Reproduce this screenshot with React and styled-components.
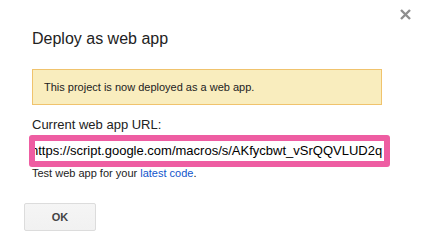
import styled, { createGlobalStyle } from "styled-components";

const GlobalStyle = createGlobalStyle`
  body {
    margin: 0;
    background: #ffffff;
    font-family: "Liberation Sans", Arial, sans-serif;
  }
`;

const Dialog = styled.div`
  position: relative;
  width: 424px;
  height: 241px;
  box-sizing: border-box;
  background: #ffffff;
  color: #222222;
`;

const CloseButton = styled.button`
  position: absolute;
  top: 8px;
  right: 13px;
  width: 12px;
  height: 12px;
  padding: 0;
  border: 0;
  background: transparent;
  display: flex;
  align-items: center;
  justify-content: center;
  cursor: pointer;
`;

const Content = styled.div`
  padding: 29px 32px 0;
`;

const Title = styled.h2`
  margin: 0;
  font-size: 16px;
  line-height: 20px;
  font-weight: normal;
  color: #222222;
`;

const Notice = styled.div`
  margin-top: 20px;
  width: 350px;
  box-sizing: border-box;
  padding: 10px 11px;
  border: 1px solid #f0c36d;
  background: #f9edbe;
  font-size: 11px;
  line-height: 14px;
  color: #222222;
`;

const Label = styled.div`
  margin-top: 12px;
  font-size: 13px;
  line-height: 16px;
`;

const UrlField = styled.div`
  margin: 2px 0 0 -3px;
  width: 361px;
  height: 32px;
  box-sizing: border-box;
  border: 6px solid #ee5da2;
  border-radius: 3px;
  background: #ffffff;
  overflow: hidden;
  white-space: nowrap;
  font-size: 13px;
  line-height: 20px;
  color: #000000;
`;

const UrlText = styled.span`
  display: inline-block;
  margin-left: -4px;
`;

const Help = styled.div`
  margin-top: -1px;
  font-size: 11px;
  line-height: 14px;
  color: #222222;
`;

const Link = styled.a`
  color: #1155cc;
  text-decoration: none;
`;

const Footer = styled.div`
  margin-top: 23px;
  padding-left: 24px;
  display: flex;
`;

const Button = styled.button`
  width: 72px;
  height: 28px;
  box-sizing: border-box;
  border: 1px solid #dcdcdc;
  border-radius: 2px;
  background: linear-gradient(#f5f5f5, #f1f1f1);
  font-family: "Liberation Sans", Arial, sans-serif;
  font-size: 11px;
  font-weight: bold;
  color: #444444;
  padding: 0;
`;

const CloseIcon = () => (
  <svg width="11" height="11" viewBox="0 0 11 11">
    <path
      d="M1 1 L10 10 M10 1 L1 10"
      stroke="#8e8e8e"
      strokeWidth="2.4"
      strokeLinecap="butt"
      fill="none"
    />
  </svg>
);

export default function App() {
  return (
    <>
      <GlobalStyle />
      <Dialog>
        <CloseButton aria-label="Close">
          <CloseIcon />
        </CloseButton>
        <Content>
          <Title>Deploy as web app</Title>
          <Notice>This project is now deployed as a web app.</Notice>
          <Label>Current web app URL:</Label>
          <UrlField>
            <UrlText>https://script.google.com/macros/s/AKfycbwt_vSrQQVLUD2q</UrlText>
          </UrlField>
          <Help>
            Test web app for your <Link href="#">latest code</Link>.
          </Help>
        </Content>
        <Footer>
          <Button>OK</Button>
        </Footer>
      </Dialog>
    </>
  );
}
